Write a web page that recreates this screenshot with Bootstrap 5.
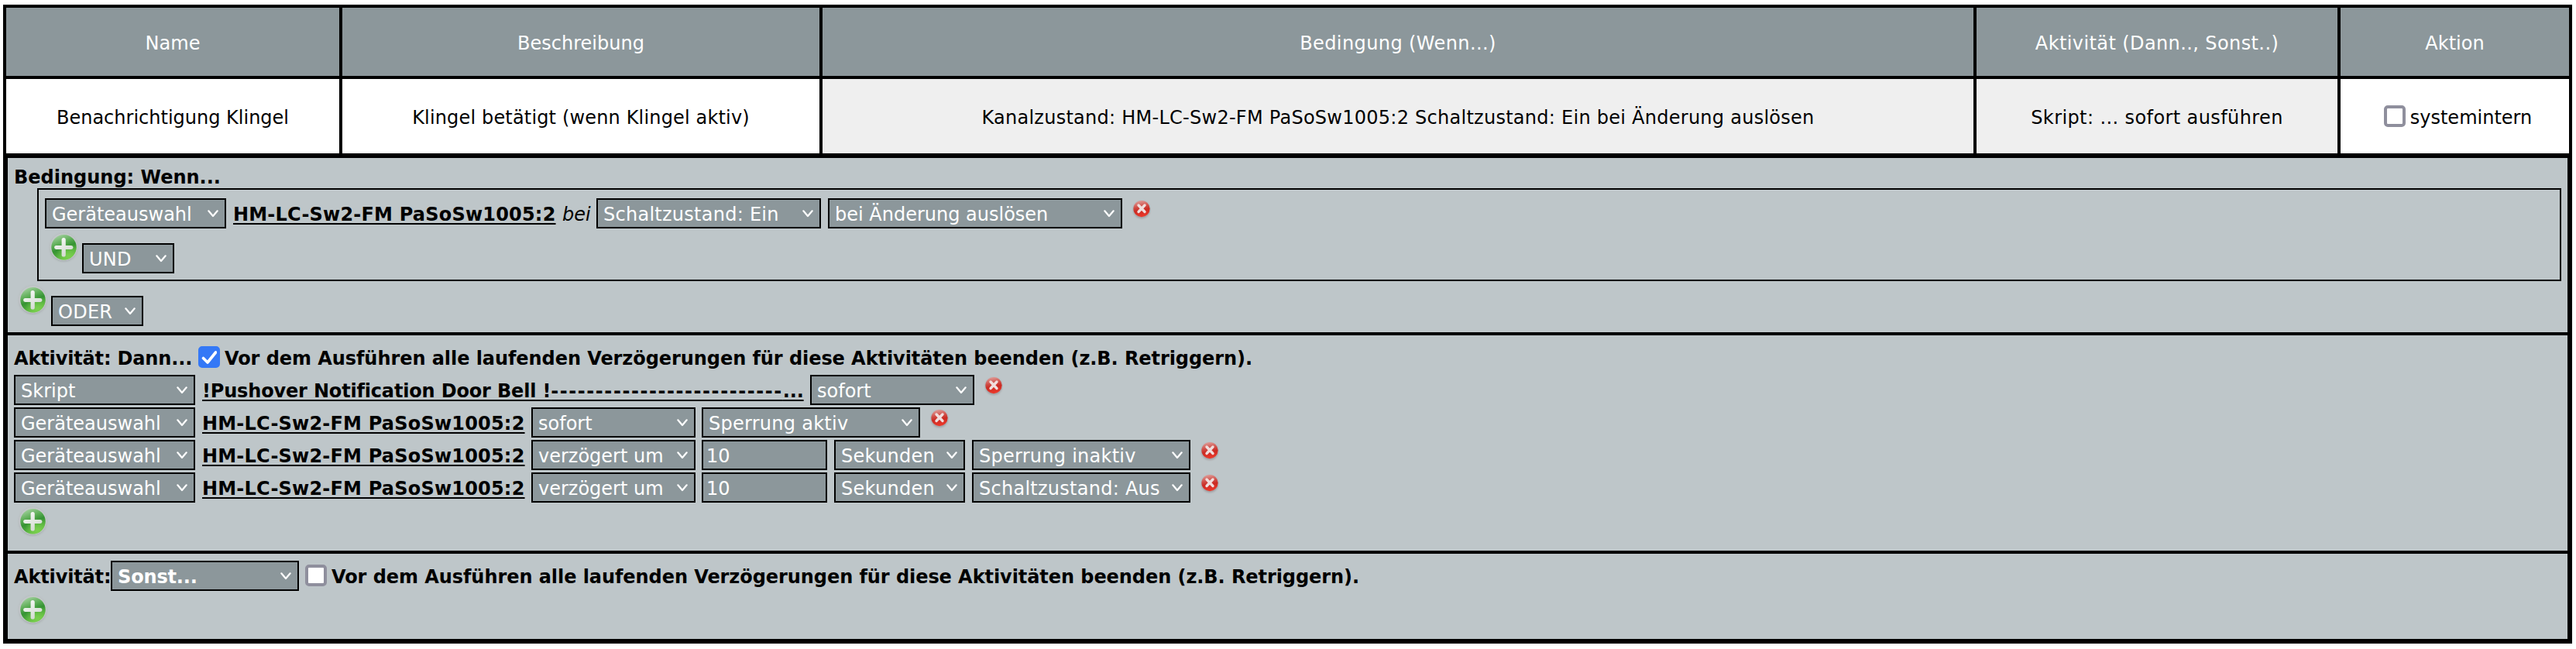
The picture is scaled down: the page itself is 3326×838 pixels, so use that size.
<!DOCTYPE html>
<html lang="de">
<head>
<meta charset="utf-8">
<title>Programme</title>
<link href="https://cdn.jsdelivr.net/npm/bootstrap@5.3.0/dist/css/bootstrap.min.css" rel="stylesheet">
<script src="https://cdn.jsdelivr.net/npm/bootstrap@5.3.0/dist/js/bootstrap.bundle.min.js"></script>
<style>
  :root { --head: #8c979b; --pane: #bec6c9; }
  body { font: 24px/28px "DejaVu Sans", Verdana, sans-serif; color: #000; background: #fff; white-space: nowrap; }
  .program { margin: 6px 5px 0 4px; width: 3317px; }

  /* overview table */
  .overview { grid-template-columns: 430px 616px 1486px 466px 295px; grid-template-rows: 88px 96px; gap: 4px; padding: 4px; background: #000; }
  .cell { background: #fff; padding-top: 4px; }
  .cell-head { background: var(--head); color: #fff; padding-top: 3px; }
  .cell-soft { background: #efefef; }

  /* rule editor */
  .editor { border: 6px solid #000; border-top-width: 2px; background: var(--pane); }
  .pane { padding-left: 8px; }
  .pane + .pane { border-top: 4px solid #000; }
  .pane-if { height: 225px; padding-top: 11px; }
  .pane-then { height: 282px; padding-top: 14px; }
  .pane-else { height: 114px; padding-top: 9px; }
  .group { height: 120px; margin: 0 8px 0 30px; padding: 11px 0 0 8px; border: 2px solid #000; }
  .line { gap: 8px; height: 39px; }
  .line + .line { margin-top: 3px; }
  .adder { gap: 4px; margin: 4px 0 0 4px; height: 54px; }
  .adder .pick { margin-top: 15px; }

  .pick { display: flex; align-items: center; justify-content: space-between; flex: none; height: 39px; padding: 2px 8px 0 7px; border: 2px solid #000; border-radius: 0; background: var(--head); color: #fff; font: inherit; }
  .pick svg { flex: none; margin-top: -1px; }
  .pick-delay { padding-left: 4px; }
  .w-type { width: 234px; } .w-join { width: 119px; } .w-state { width: 290px; } .w-trigger { width: 380px; }
  .w-when { width: 212px; } .w-num { width: 162px; } .w-unit { width: 169px; } .w-value { width: 282px; } .w-else { width: 243px; }
  .target { flex: none; width: 417px; margin: 7px 0 0 1px; font-weight: bold; letter-spacing: .2px; color: #000; text-decoration: underline; text-decoration-thickness: 2px; text-underline-offset: 3px; text-decoration-skip-ink: none; }
  .target-script { width: 776px; letter-spacing: -.17px; }
  .dashes { letter-spacing: 1.56px; }
  .nudge { margin-left: 1px; }
  .del { flex: none; margin: 2px 0 0 5px; }

  .tick { flex: none; width: 28px; height: 28px; margin: 0; border: 4px solid #8f8f9d; border-radius: 5px !important; background-color: #fff; }
  .tick:checked { border-color: #3478f6; background-color: #3478f6; background-image: url("data:image/svg+xml,%3Csvg xmlns='http://www.w3.org/2000/svg' viewBox='0 0 28 28'%3E%3Cpath d='M6.5 15.5 L12 21 L22.5 8' fill='none' stroke='%23fff' stroke-width='3.6' stroke-linecap='round' stroke-linejoin='round'/%3E%3C/svg%3E") !important; background-size: 28px 28px; background-origin: border-box; background-position: 0 0; }
  .ls-a { letter-spacing: .4px; } .ls-b { letter-spacing: .26px; } .ls-c { letter-spacing: -.15px; }
</style>
</head>
<body>
<svg width="0" height="0" class="position-absolute">
  <defs>
    <linearGradient id="ring" x1="0" y1="0" x2="0" y2="1"><stop offset="0" stop-color="#b2b8b9"/><stop offset=".5" stop-color="#b9bcbe"/><stop offset="1" stop-color="#a0a6a8"/></linearGradient>
    <linearGradient id="green" x1=".2" y1="0" x2=".6" y2="1"><stop offset="0" stop-color="#a9d3a5"/><stop offset=".35" stop-color="#5cad55"/><stop offset=".55" stop-color="#369334"/><stop offset="1" stop-color="#6cc646"/></linearGradient>
    <radialGradient id="glow" cx=".68" cy=".85" r=".5"><stop offset="0" stop-color="#7ad04e"/><stop offset="1" stop-color="#7ad04e" stop-opacity="0"/></radialGradient>
    <linearGradient id="cross" x1="0" y1="0" x2=".6" y2="1"><stop offset="0" stop-color="#fff"/><stop offset=".5" stop-color="#e6ebe5"/><stop offset="1" stop-color="#d3d9d2"/></linearGradient>
    <linearGradient id="red" x1=".3" y1="0" x2=".5" y2="1"><stop offset="0" stop-color="#e0a09c"/><stop offset=".4" stop-color="#cf4a43"/><stop offset=".6" stop-color="#cb2a22"/><stop offset="1" stop-color="#ee3a2c"/></linearGradient>
    <filter id="soft" x="-20%" y="-20%" width="140%" height="140%"><feGaussianBlur stdDeviation=".8"/></filter>
    <symbol id="chev" viewBox="0 0 14 10"><path d="M1.3 1.3 L7 8 L12.7 1.3" fill="none" stroke="#fff" stroke-width="2.2" stroke-linecap="round" stroke-linejoin="round"/></symbol>
    <symbol id="plus" viewBox="0 0 40 40">
      <circle cx="20.3" cy="20.4" r="18.6" fill="url(#ring)" opacity=".75" filter="url(#soft)"/>
      <circle cx="20.3" cy="19.8" r="17.6" fill="#c3c8c9"/>
      <circle cx="20.5" cy="20.3" r="16.2" fill="url(#green)"/>
      <circle cx="20.5" cy="20.3" r="16.2" fill="url(#glow)"/>
      <path d="M20.2 11 V30 M10.5 20.5 H30" stroke="url(#cross)" stroke-width="5" stroke-linecap="round" fill="none" opacity="0"/>
      <path d="M17.6 10.5 a2.6 2.6 0 0 1 5.2 0 V18 H30 a2.5 2.5 0 0 1 0 5 H22.8 V30 a2.6 2.6 0 0 1 -5.2 0 V23 H10.6 a2.5 2.5 0 0 1 0 -5 H17.6 Z" fill="url(#cross)"/>
    </symbol>
    <symbol id="cancel" viewBox="0 0 24 26">
      <circle cx="12" cy="13" r="11" fill="#8d8689" opacity=".6" filter="url(#soft)"/>
      <circle cx="12" cy="11.6" r="10.6" fill="url(#red)"/>
      <path d="M8 7 L16 15.5 M16 7 L8 15.5" stroke="#f0dedd" stroke-width="3.4" stroke-linecap="round"/>
    </symbol>
  </defs>
</svg>

<main class="program">
  <div class="overview d-grid text-center">
    <div class="cell-head d-flex align-items-center justify-content-center">Name</div>
    <div class="cell-head d-flex align-items-center justify-content-center">Beschreibung</div>
    <div class="cell-head d-flex align-items-center justify-content-center ls-a">Bedingung (Wenn...)</div>
    <div class="cell-head d-flex align-items-center justify-content-center ls-a">Aktivität (Dann.., Sonst..)</div>
    <div class="cell-head d-flex align-items-center justify-content-center">Aktion</div>
    <div class="cell d-flex align-items-center justify-content-center">Benachrichtigung Klingel</div>
    <div class="cell d-flex align-items-center justify-content-center"><span style="letter-spacing:.16px">Klingel betätigt (wenn Klingel aktiv)</span></div>
    <div class="cell cell-soft d-flex align-items-center justify-content-center ls-b">Kanalzustand: HM-LC-Sw2-FM PaSoSw1005:2 Schaltzustand: Ein bei Änderung auslösen</div>
    <div class="cell cell-soft d-flex align-items-center justify-content-center ls-a">Skript: ... sofort ausführen</div>
    <label class="cell d-flex align-items-center justify-content-center pt-0 ps-2"><input type="checkbox" class="form-check-input tick me-1"><span class="pt-1 ps-1" style="margin-left:-2px">systemintern</span></label>
  </div>

  <div class="editor">
    <section class="pane pane-if">
      <div class="fw-bold">Bedingung: Wenn...</div>
      <div class="group">
        <div class="line d-flex">
          <button class="pick w-type"><span>Geräteauswahl</span><svg width="14" height="10"><use href="#chev"/></svg></button>
          <a class="target">HM-LC-Sw2-FM PaSoSw1005:2</a>
          <em style="width:36px;margin-top:7px">bei</em>
          <button class="pick w-state ls-b"><span>Schaltzustand: Ein</span><svg width="14" height="10"><use href="#chev"/></svg></button>
          <button class="pick w-trigger nudge"><span>bei Änderung auslösen</span><svg width="14" height="10"><use href="#chev"/></svg></button>
          <svg class="del" width="24" height="26"><use href="#cancel"/></svg>
        </div>
        <div class="adder d-flex">
          <svg width="40" height="40"><use href="#plus"/></svg>
          <button class="pick w-join ls-b"><span>UND</span><svg width="14" height="10"><use href="#chev"/></svg></button>
        </div>
      </div>
      <div class="adder d-flex">
        <svg width="40" height="40"><use href="#plus"/></svg>
        <button class="pick w-join ls-b"><span>ODER</span><svg width="14" height="10"><use href="#chev"/></svg></button>
      </div>
    </section>

    <section class="pane pane-then">
      <label class="d-flex fw-bold" style="height:37px"><span class="ls-c" style="width:238px;margin-top:2px">Aktivität: Dann...</span><input type="checkbox" checked class="form-check-input tick"><span style="margin:2px 0 0 6px;letter-spacing:-.066px">Vor dem Ausführen alle laufenden Verzögerungen für diese Aktivitäten beenden (z.B. Retriggern).</span></label>
      <div class="line d-flex">
        <button class="pick w-type"><span>Skript</span><svg width="14" height="10"><use href="#chev"/></svg></button>
        <a class="target target-script">!Pushover Notification Door Bell !<span class="dashes">--------------------------</span>...</a>
        <button class="pick w-when nudge"><span>sofort</span><svg width="14" height="10"><use href="#chev"/></svg></button>
        <svg class="del" width="24" height="26"><use href="#cancel"/></svg>
      </div>
      <div class="line d-flex">
        <button class="pick w-type"><span>Geräteauswahl</span><svg width="14" height="10"><use href="#chev"/></svg></button>
        <a class="target">HM-LC-Sw2-FM PaSoSw1005:2</a>
        <button class="pick w-when"><span>sofort</span><svg width="14" height="10"><use href="#chev"/></svg></button>
        <button class="pick w-value ls-b"><span>Sperrung aktiv</span><svg width="14" height="10"><use href="#chev"/></svg></button>
        <svg class="del" width="24" height="26"><use href="#cancel"/></svg>
      </div>
      <div class="line d-flex">
        <button class="pick w-type"><span>Geräteauswahl</span><svg width="14" height="10"><use href="#chev"/></svg></button>
        <a class="target">HM-LC-Sw2-FM PaSoSw1005:2</a>
        <button class="pick w-when"><span>verzögert um</span><svg width="14" height="10"><use href="#chev"/></svg></button>
        <div class="pick pick-delay w-num">10</div>
        <button class="pick w-unit nudge ls-b"><span>Sekunden</span><svg width="14" height="10"><use href="#chev"/></svg></button>
        <button class="pick w-value nudge ls-b"><span>Sperrung inaktiv</span><svg width="14" height="10"><use href="#chev"/></svg></button>
        <svg class="del" width="24" height="26"><use href="#cancel"/></svg>
      </div>
      <div class="line d-flex">
        <button class="pick w-type"><span>Geräteauswahl</span><svg width="14" height="10"><use href="#chev"/></svg></button>
        <a class="target">HM-LC-Sw2-FM PaSoSw1005:2</a>
        <button class="pick w-when"><span>verzögert um</span><svg width="14" height="10"><use href="#chev"/></svg></button>
        <div class="pick pick-delay w-num">10</div>
        <button class="pick w-unit nudge ls-b"><span>Sekunden</span><svg width="14" height="10"><use href="#chev"/></svg></button>
        <button class="pick w-value nudge ls-b"><span>Schaltzustand: Aus</span><svg width="14" height="10"><use href="#chev"/></svg></button>
        <svg class="del" width="24" height="26"><use href="#cancel"/></svg>
      </div>
      <div class="adder d-flex"><svg width="40" height="40"><use href="#plus"/></svg></div>
    </section>

    <section class="pane pane-else">
      <div class="line d-flex fw-bold" style="gap:0">
        <span class="ls-c" style="width:125px;margin-top:7px">Aktivität:</span>
        <button class="pick w-else ls-c"><span>Sonst...</span><svg width="14" height="10"><use href="#chev"/></svg></button>
        <label class="d-flex" style="margin:5px 0 0 8px"><input type="checkbox" class="form-check-input tick"><span style="margin:2px 0 0 6px;letter-spacing:-.066px">Vor dem Ausführen alle laufenden Verzögerungen für diese Aktivitäten beenden (z.B. Retriggern).</span></label>
      </div>
      <div class="adder d-flex"><svg width="40" height="40"><use href="#plus"/></svg></div>
    </section>
  </div>
</main>
</body>
</html>
